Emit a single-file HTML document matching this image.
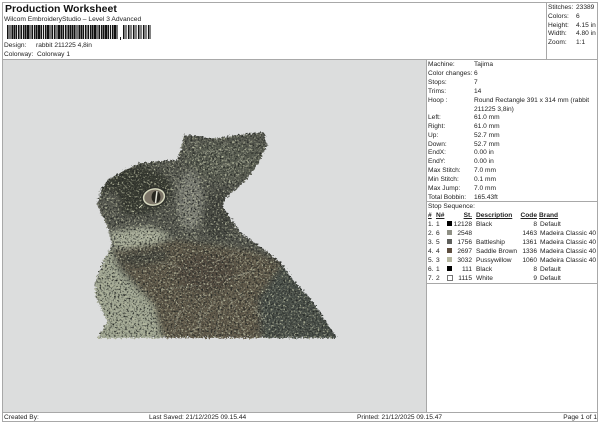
<!DOCTYPE html>
<html><head><meta charset="utf-8">
<style>
html,body{margin:0;padding:0;background:#fff}
#p{position:relative;width:600px;height:424px;overflow:hidden;background:#fff;font-family:"Liberation Sans",Arial,sans-serif;font-size:6.6px;color:#222;line-height:9px}
#p div{position:absolute;white-space:nowrap}
.l{background:#a8a8a8}
.u{text-decoration:underline;font-weight:bold}
.r{text-align:right}
.s{width:5px;height:5px}
</style></head><body><div id="p">
<div class="l" style="left:2px;top:2px;width:596px;height:1px"></div>
<div class="l" style="left:2px;top:2px;width:1px;height:420px"></div>
<div class="l" style="left:597px;top:2px;width:1px;height:420px"></div>
<div class="l" style="left:2px;top:59px;width:596px;height:1px"></div>
<div class="l" style="left:546px;top:2px;width:1px;height:58px"></div>
<div style="left:3px;top:60px;width:423px;height:352px;background:#dcdddd"></div>
<div class="l" style="left:426px;top:60px;width:1px;height:352px"></div>
<div class="l" style="left:427px;top:201px;width:170px;height:1px"></div>
<div class="l" style="left:427px;top:283px;width:170px;height:1px"></div>
<div class="l" style="left:2px;top:412px;width:596px;height:1px"></div>
<div class="l" style="left:2px;top:421px;width:596px;height:1px"></div>

<div style="left:5px;top:3px;font-size:10.5px;font-weight:bold;line-height:12px;color:#111">Production Worksheet</div>
<div style="left:4px;top:15px;font-size:6.7px">Wilcom EmbroideryStudio – Level 3 Advanced</div>
<div style="left:7px;top:25px;width:111px;height:14px;background:repeating-linear-gradient(90deg,#111 0,#111 1.7px,#ddd 1.7px,#ddd 2.4px,#111 2.4px,#111 3.5px,#ddd 3.5px,#ddd 4.3px,#111 4.3px,#111 6px,#ddd 6px,#ddd 6.7px)"></div>
<div style="left:120px;top:37px;width:1px;height:3px;background:#222"></div>
<div style="left:123px;top:25px;width:28px;height:14px;background:repeating-linear-gradient(90deg,#111 0,#111 1.5px,#eee 1.5px,#eee 2.6px,#111 2.6px,#111 3.7px,#eee 3.7px,#eee 5px)"></div>
<div style="left:4px;top:41px">Design:</div><div style="left:36px;top:41px">rabbit 211225 4,8in</div>
<div style="left:4px;top:50px">Colorway:</div><div style="left:37px;top:50px">Colorway 1</div>

<div style="left:548px;top:3px">Stitches:</div><div style="left:576px;top:3px">23389</div>
<div style="left:548px;top:12px">Colors:</div><div style="left:576px;top:12px">6</div>
<div style="left:548px;top:21px">Height:</div><div style="left:576px;top:21px">4.15 in</div>
<div style="left:548px;top:29px">Width:</div><div style="left:576px;top:29px">4.80 in</div>
<div style="left:548px;top:38px">Zoom:</div><div style="left:576px;top:38px">1:1</div>

<svg style="position:absolute;left:0;top:0" width="600" height="424" viewBox="0 0 600 424">
<defs>
<filter id="fur" x="-8%" y="-8%" width="116%" height="116%" color-interpolation-filters="sRGB">
<feTurbulence type="fractalNoise" baseFrequency="0.55" numOctaves="2" seed="7" result="n"/>
<feDisplacementMap in="SourceGraphic" in2="n" scale="6" xChannelSelector="R" yChannelSelector="G" result="d"/>
<feColorMatrix in="n" type="matrix" values="0 0 0 0 .76 0 0 0 0 .77 0 0 0 0 .66 3.5 0 0 0 -1.85" result="a"/>
<feComposite in="a" in2="d" operator="in" result="light"/>
<feColorMatrix in="n" type="matrix" values="0 0 0 0 .14 0 0 0 0 .15 0 0 0 0 .14 0 3.5 0 0 -1.75" result="b"/>
<feComposite in="b" in2="d" operator="in" result="dark"/>
<feMerge><feMergeNode in="d"/><feMergeNode in="light"/><feMergeNode in="dark"/></feMerge>
</filter>
<filter id="bl" x="-30%" y="-30%" width="160%" height="160%"><feGaussianBlur stdDeviation="3"/></filter>
<clipPath id="body"><path d="M97 338L108 322L96 298L95 283L103 262L112 245L108 228L102 215L97 204L101 190L108 180L125 170L140 163L160 161L177 160L181 150L184 135L198 136L212 139L237 135L264 132L267 145L259 162L246 180L226 198L222 206L230 218L242 234L262 248L280 262L293 280L310 298L337 338Z"/></clipPath>
</defs>
<g filter="url(#fur)">
<g clip-path="url(#body)">
<rect x="90" y="125" width="255" height="215" fill="#55574f"/>
<g filter="url(#bl)">
<ellipse cx="135" cy="190" rx="36" ry="24" fill="#383a33"/>
<ellipse cx="110" cy="205" rx="10" ry="14" fill="#5a5b52"/>
<ellipse cx="225" cy="160" rx="42" ry="22" fill="#585b51"/>
<ellipse cx="190" cy="200" rx="13" ry="30" fill="#7b7e75"/>
<ellipse cx="218" cy="215" rx="15" ry="25" fill="#45463f"/>
<path d="M107 232L150 226L172 236L150 246L118 250Z" fill="#a8ad9a"/>
<path d="M112 250L175 240L250 250L285 265L258 300L262 345L164 345L152 305L122 268Z" fill="#5e5849"/>
<path d="M118 254L165 248L170 260L140 266L122 264Z" fill="#484940"/>
<ellipse cx="205" cy="272" rx="30" ry="20" fill="#524c3f"/>
<path d="M283 262L300 275L345 345L262 345L258 298Z" fill="#4a504a"/>
<path d="M108 240L118 268L153 305L164 345L88 345L88 290Z" fill="#a2a894"/>
</g>
</g>
<g fill="none" stroke="#bcbeab" stroke-width=".7" opacity=".6" clip-path="url(#body)">
<path d="M190 160L183 140M196 160L196 140M202 165L210 142M208 170L225 142M215 175L240 142M222 180L252 145M228 186L256 155M200 152L230 150M212 168L248 160"/>
<path d="M176 200L188 240M184 195L196 240M192 190L206 235M170 165L180 195"/>
<path d="M215 300L190 335M222 300L215 338M230 298L245 335M238 292L270 325M205 295L170 320M200 285L160 290M180 310L172 336M200 308L200 336M225 280L255 270M215 262L240 250M190 270L160 262M120 232L165 238M125 226L160 232"/>
</g>
</g>
<ellipse cx="154" cy="197" rx="12.5" ry="10" fill="#2e2f2a" transform="rotate(-12 154 197)"/>
<ellipse cx="154" cy="197" rx="10.5" ry="8" fill="#7c7568" stroke="#d5d7bd" stroke-width="1.5" transform="rotate(-12 154 197)"/>
<ellipse cx="156" cy="197" rx="4.5" ry="6" fill="#26251f"/>
<path d="M157 191L155.5 203" stroke="#e4e4d8" stroke-width="1.5"/>
<path d="M142 205L139 208" stroke="#d5d7bd" stroke-width="1"/>
</svg>

<div style="left:428px;top:60px">Machine:</div><div style="left:474px;top:60px">Tajima</div>
<div style="left:428px;top:69px">Color changes:</div><div style="left:474px;top:69px">6</div>
<div style="left:428px;top:78px">Stops:</div><div style="left:474px;top:78px">7</div>
<div style="left:428px;top:87px">Trims:</div><div style="left:474px;top:87px">14</div>
<div style="left:428px;top:96px">Hoop :</div><div style="left:474px;top:96px">Round Rectangle 391 x 314 mm (rabbit</div><div style="left:474px;top:105px">211225 3,8in)</div>
<div style="left:428px;top:113px">Left:</div><div style="left:474px;top:113px">61.0 mm</div>
<div style="left:428px;top:122px">Right:</div><div style="left:474px;top:122px">61.0 mm</div>
<div style="left:428px;top:131px">Up:</div><div style="left:474px;top:131px">52.7 mm</div>
<div style="left:428px;top:140px">Down:</div><div style="left:474px;top:140px">52.7 mm</div>
<div style="left:428px;top:148px">EndX:</div><div style="left:474px;top:148px">0.00 in</div>
<div style="left:428px;top:157px">EndY:</div><div style="left:474px;top:157px">0.00 in</div>
<div style="left:428px;top:166px">Max Stitch:</div><div style="left:474px;top:166px">7.0 mm</div>
<div style="left:428px;top:175px">Min Stitch:</div><div style="left:474px;top:175px">0.1 mm</div>
<div style="left:428px;top:184px">Max Jump:</div><div style="left:474px;top:184px">7.0 mm</div>
<div style="left:428px;top:193px">Total Bobbin:</div><div style="left:474px;top:193px">165.43ft</div>

<div style="left:428px;top:202px">Stop Sequence:</div>
<div class="u" style="left:428px;top:211px">#</div><div class="u" style="left:436px;top:211px">N#</div><div class="u r" style="left:452px;width:20px;top:211px">St.</div><div class="u" style="left:476px;top:211px">Description</div><div class="u r" style="left:510px;width:27px;top:211px">Code</div><div class="u" style="left:539px;top:211px">Brand</div>

<div style="left:428px;top:220px">1.</div><div style="left:436px;top:220px">1</div><div class="s" style="left:447px;top:221px;background:#000"></div><div class="r" style="left:452px;width:20px;top:220px">12128</div><div style="left:476px;top:220px">Black</div><div class="r" style="left:510px;width:27px;top:220px">8</div><div style="left:540px;top:220px">Default</div>
<div style="left:428px;top:229px">2.</div><div style="left:436px;top:229px">6</div><div class="s" style="left:447px;top:230px;background:#8f9085"></div><div class="r" style="left:452px;width:20px;top:229px">2548</div><div class="r" style="left:510px;width:27px;top:229px">1463</div><div style="left:540px;top:229px">Madeira Classic 40</div>
<div style="left:428px;top:238px">3.</div><div style="left:436px;top:238px">5</div><div class="s" style="left:447px;top:239px;background:#5f605c"></div><div class="r" style="left:452px;width:20px;top:238px">1756</div><div style="left:476px;top:238px">Battleship</div><div class="r" style="left:510px;width:27px;top:238px">1361</div><div style="left:540px;top:238px">Madeira Classic 40</div>
<div style="left:428px;top:247px">4.</div><div style="left:436px;top:247px">4</div><div class="s" style="left:447px;top:248px;background:#5e4e40"></div><div class="r" style="left:452px;width:20px;top:247px">2697</div><div style="left:476px;top:247px">Saddle Brown</div><div class="r" style="left:510px;width:27px;top:247px">1336</div><div style="left:540px;top:247px">Madeira Classic 40</div>
<div style="left:428px;top:256px">5.</div><div style="left:436px;top:256px">3</div><div class="s" style="left:447px;top:257px;background:#b4b59e"></div><div class="r" style="left:452px;width:20px;top:256px">3032</div><div style="left:476px;top:256px">Pussywillow</div><div class="r" style="left:510px;width:27px;top:256px">1060</div><div style="left:540px;top:256px">Madeira Classic 40</div>
<div style="left:428px;top:265px">6.</div><div style="left:436px;top:265px">1</div><div class="s" style="left:447px;top:266px;background:#000"></div><div class="r" style="left:452px;width:20px;top:265px">111</div><div style="left:476px;top:265px">Black</div><div class="r" style="left:510px;width:27px;top:265px">8</div><div style="left:540px;top:265px">Default</div>
<div style="left:428px;top:274px">7.</div><div style="left:436px;top:274px">2</div><div class="s" style="left:447px;top:275px;width:4px;height:4px;background:#fff;border:.6px solid #777"></div><div class="r" style="left:452px;width:20px;top:274px">1115</div><div style="left:476px;top:274px">White</div><div class="r" style="left:510px;width:27px;top:274px">9</div><div style="left:540px;top:274px">Default</div>

<div style="left:4px;top:413px">Created By:</div>
<div style="left:149px;top:413px">Last Saved: 21/12/2025 09.15.44</div>
<div style="left:357px;top:413px">Printed: 21/12/2025 09.15.47</div>
<div class="r" style="left:540px;width:57px;top:413px">Page 1 of 1</div>
</div></body></html>
